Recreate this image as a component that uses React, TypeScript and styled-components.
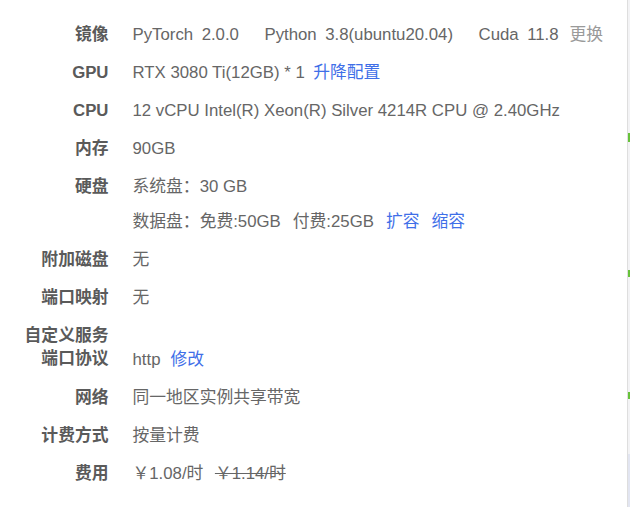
import styled, { createGlobalStyle } from 'styled-components';

const GlobalStyle = createGlobalStyle`
  html, body {
    margin: 0;
    padding: 0;
    background: #ffffff;
  }
  body {
    font-family: 'Liberation Sans', 'Noto Sans CJK SC', sans-serif;
    font-size: 16.8px;
  }
`;

const App = () => {
  return (
    <Page>
      <GlobalStyle />
      <Main>
        <Grid>
          <Label>镜像</Label>
          <Value>
            <Group>
              <span>PyTorch</span>
              <span>2.0.0</span>
            </Group>
            <Group>
              <span>Python</span>
              <span>3.8(ubuntu20.04)</span>
            </Group>
            <Group $last>
              <span>Cuda</span>
              <span>11.8</span>
            </Group>
            <Muted>更换</Muted>
          </Value>

          <Label>GPU</Label>
          <Value $gap={8.5}>
            <span>RTX 3080 Ti(12GB) * 1</span>
            <Link>升降配置</Link>
          </Value>

          <Label>CPU</Label>
          <Value>12 vCPU Intel(R) Xeon(R) Silver 4214R CPU @ 2.40GHz</Value>

          <Label>内存</Label>
          <Value>90GB</Value>

          <Label>硬盘</Label>
          <Lines>
            <Value>系统盘：30 GB</Value>
            <Value $gap={12}>
              <span>数据盘：免费:50GB</span>
              <span>付费:25GB</span>
              <Link>扩容</Link>
              <Link>缩容</Link>
            </Value>
          </Lines>

          <Label>附加磁盘</Label>
          <Value>无</Value>

          <Label>端口映射</Label>
          <Value>无</Value>

          <Label $tall>
            自定义服务
            <br />
            端口协议
          </Label>
          <Value $gap={10} $bottom>
            <span>http</span>
            <Link>修改</Link>
          </Value>

          <Label>网络</Label>
          <Value>同一地区实例共享带宽</Value>

          <Label>计费方式</Label>
          <Value>按量计费</Value>

          <Label>费用</Label>
          <Value $gap={11.5}>
            <span>￥1.08/时</span>
            <Old>￥1.14/时</Old>
          </Value>
        </Grid>
      </Main>
      <SideRail>
        <Mark $top={133} $h={9} />
        <Mark $top={128} $h={7} />
        <Mark $top={115} $h={7} />
        <RailTail />
      </SideRail>
    </Page>
  );
};

export default App;

const Page = styled.div`
  display: flex;
  width: 630px;
  height: 507px;
  overflow: hidden;
  background: #ffffff;
`;

const Main = styled.div`
  flex: 1;
  padding-top: 22.5px;
`;

const Grid = styled.div`
  display: grid;
  grid-template-columns: 108.5px 1fr;
  column-gap: 24px;
  row-gap: 15px;
  align-items: start;
`;

const Label = styled.div<{ $tall?: boolean }>`
  text-align: right;
  font-weight: 700;
  color: #5a5a5a;
  line-height: ${(p) => (p.$tall ? '23.5px' : '23px')};
  white-space: nowrap;
`;

const Value = styled.div<{ $gap?: number; $bottom?: boolean }>`
  display: flex;
  align-items: center;
  gap: ${(p) => p.$gap ?? 0}px;
  align-self: ${(p) => (p.$bottom ? 'end' : 'start')};
  color: #666666;
  line-height: 23px;
  white-space: nowrap;
`;

const Lines = styled.div`
  display: flex;
  flex-direction: column;
  gap: 12px;
`;

const Group = styled.span<{ $last?: boolean }>`
  display: inline-flex;
  gap: 8.5px;
  margin-right: ${(p) => (p.$last ? 11 : 25.5)}px;
`;

const Muted = styled.span`
  color: #9a9a9a;
`;

const Link = styled.span`
  color: #3f6fe8;
  cursor: pointer;
`;

const Old = styled.span`
  text-decoration: line-through;
  color: #666666;
`;

const SideRail = styled.div`
  display: flex;
  flex-direction: column;
  width: 2px;
  border-left: 1px solid #dedede;
  background: #f3f3f5;
`;

const Mark = styled.div<{ $top: number; $h: number }>`
  flex: none;
  margin-top: ${(p) => p.$top}px;
  height: ${(p) => p.$h}px;
  background: #67c23a;
`;

const RailTail = styled.div`
  margin-top: 55px;
  flex: 1;
  background: #e2e5f1;
`;
